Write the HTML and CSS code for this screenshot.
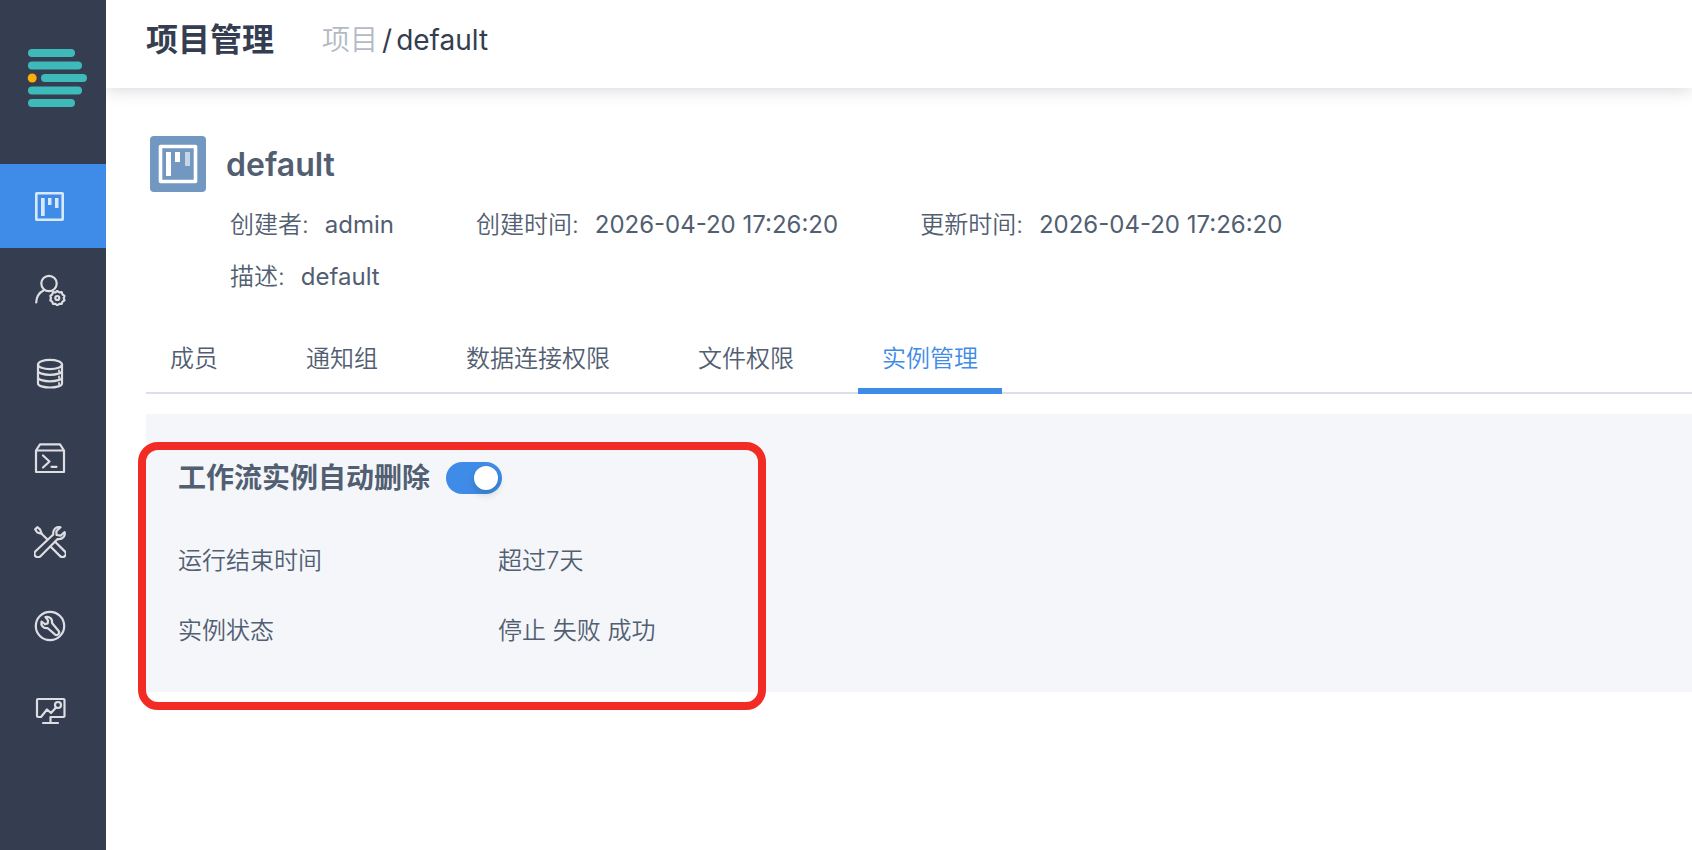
FILE: index.html
```html
<!DOCTYPE html>
<html lang="zh-CN">
<head>
<meta charset="utf-8">
<title>项目管理</title>
<link rel="stylesheet" href="styles.css">
</head>
<body>
<div class="app">
  <aside class="sidebar">
    <a class="logo" href="#" aria-label="首页">
      <svg width="64" height="60" viewBox="0 0 64 60" fill="#3fbaba">
        <rect x="2" y="1" width="47" height="8" rx="4"/>
        <rect x="2" y="13.500" width="54" height="8" rx="4"/>
        <rect x="15" y="26" width="46" height="8" rx="4"/>
        <rect x="2" y="38.500" width="54" height="8" rx="4"/>
        <rect x="2" y="51" width="47" height="8" rx="4"/>
        <circle cx="6.200" cy="30" r="4.500" fill="#fab005"/>
      </svg>
    </a>
    <nav class="menu">
      <a class="menu-item active" href="#" aria-label="项目管理">
        <svg class="icon" viewBox="0 0 32 32"><rect x="2.300" y="3.300" width="26.400" height="26.400" rx=".5" stroke-width="2.600"/><g fill="currentColor" stroke="none"><rect x="7" y="8" width="3.700" height="18"/><rect x="14" y="8" width="3.500" height="7"/><rect x="21" y="8" width="3.500" height="10"/></g></svg>
      </a>
      <a class="menu-item" href="#" aria-label="用户管理">
        <svg class="icon" viewBox="0 0 32 32"><circle cx="15" cy="9.500" r="7.700"/><path d="M2.200 28.500C2.500 22.500 5.500 18.500 9.800 16.300"/><path d="M23.300 17l2 1.300 2.400-.1.800 2.300 2 1.300-.8 2.300.8 2.200-2 1.400-.8 2.200-2.400 0-2 1.400-1.900-1.400-2.400 0-.8-2.200-1.900-1.400.7-2.200-.7-2.300 1.900-1.300.8-2.300 2.400.1z"/><circle cx="23.300" cy="24" r="2"/></svg>
      </a>
      <a class="menu-item" href="#" aria-label="数据连接">
        <svg class="icon" viewBox="0 0 32 32"><ellipse cx="16" cy="6.500" rx="12" ry="4.600"/><path d="M4 6.500V25.500c0 2.300 5.400 4 12 4s12-1.700 12-4V6.500M4 12.700c0 2.300 5.400 4.100 12 4.100S28 15 28 12.700M4 19.200c0 2.300 5.400 4.100 12 4.100s12-1.800 12-4.100"/><path d="M25 12.300v1.400M25 18.500v1.400M25 24.800v1.400" stroke-width="1.800"/></svg>
      </a>
      <a class="menu-item" href="#" aria-label="脚本">
        <svg class="icon" viewBox="0 0 32 32"><path d="M2 8.500 6 2.300h20l4 6.200V30H2zM2 8.500h28"/><path d="M9 13.500l6.500 6L9 25.500M17.500 24.800h5"/></svg>
      </a>
      <a class="menu-item" href="#" aria-label="工具">
        <svg class="icon" viewBox="0 0 32 32"><path d="M26.500 1.300c-4-1-8 1.700-7.200 7.200L1.500 25.300a3.500 3.500 0 0 0 5 5L23.600 13c5 .8 8-3 7-7l-4 3.700-4-.7-.3-3.800z"/><path d="M13.500 13.500 7.800 8 6 3.300 3.300 1.200 1.200 3.300 3.300 6.500 8 8M16.500 20.500l9.600 9.600a3.300 3.300 0 0 0 4.700-4.700l-9.700-9.700"/></svg>
      </a>
      <a class="menu-item" href="#" aria-label="运维">
        <svg class="icon" viewBox="0 0 32 32"><circle cx="16" cy="16" r="14.200"/><path d="M11.500 7c4-1 7.300 2 6.500 6l6.300 7.500a2.600 2.600 0 0 1-3.700 3.700L13.500 18c-4 .8-7-2.500-6-6.500l3.500 2.700 2.700-.8.400-2.700z"/></svg>
      </a>
      <a class="menu-item" href="#" aria-label="监控">
        <svg class="icon" viewBox="0 0 32 32"><path d="M7 23H4a1 1 0 0 1-1-1V6a1 1 0 0 1 1-1h25.500a1 1 0 0 1 1 1v16a1 1 0 0 1-1 1H16.500V29M9 29h15M7 23l6-7.500 4 3.500 5-5.500"/><circle cx="24" cy="11" r="3"/></svg>
      </a>
    </nav>
  </aside>

  <div class="page">
    <header class="topbar">
      <h1 class="page-title">项目管理</h1>
      <nav class="breadcrumb"><a href="#">项目</a><span>/</span><span>default</span></nav>
    </header>

    <main class="content">
      <section class="project">
        <div class="project-head">
          <svg class="project-icon" viewBox="0 0 56 56"><rect width="56" height="56" rx="4" fill="#7297c1"/><rect x="10.500" y="10.500" width="35" height="35" fill="none" stroke="#fff" stroke-width="3.600" stroke-linejoin="round"/><g fill="#fff"><rect x="16" y="16" width="5" height="24"/><rect x="25" y="16" width="5" height="10"/><rect x="35" y="16" width="5" height="14" opacity=".6"/></g></svg>
          <h2 class="project-name">default</h2>
        </div>
        <dl class="meta">
          <div class="meta-item"><dt>创建者:</dt><dd>admin</dd></div>
          <div class="meta-item"><dt>创建时间:</dt><dd>2026-04-20 17:26:20</dd></div>
          <div class="meta-item"><dt>更新时间:</dt><dd>2026-04-20 17:26:20</dd></div>
          <div class="meta-item wide"><dt>描述:</dt><dd>default</dd></div>
        </dl>
      </section>

      <div class="tabs" role="tablist">
        <button class="tab" role="tab" type="button">成员</button>
        <button class="tab" role="tab" type="button">通知组</button>
        <button class="tab" role="tab" type="button">数据连接权限</button>
        <button class="tab" role="tab" type="button">文件权限</button>
        <button class="tab selected" role="tab" type="button" aria-selected="true">实例管理</button>
      </div>

      <section class="panel">
        <div class="panel-head">
          <label class="panel-title" for="auto-delete">工作流实例自动删除</label>
          <input class="switch" id="auto-delete" type="checkbox" role="switch" checked>
        </div>
        <dl class="rules">
          <dt>运行结束时间</dt><dd>超过7天</dd>
          <dt>实例状态</dt><dd>停止 失败 成功</dd>
        </dl>
        <div class="highlight"></div>
      </section>
    </main>
  </div>
</div>
</body>
</html>
```
FILE: styles.css
```css
* { box-sizing: border-box; }

body {
  margin: 0;
  background: #fff;
  color: #525e71;
  font-family: Inter, "Noto Sans CJK SC", sans-serif;
  font-size: 24px;
  line-height: 36px;
}

h1, h2, dl, dd { margin: 0; }
a { color: inherit; text-decoration: none; }

.app { display: flex; min-height: 100vh; }

.sidebar { flex: none; width: 106px; background: #353d50; }
.logo { display: block; height: 164px; padding: 48px 0 0 26px; }
.logo svg { display: block; }
.menu { display: flex; flex-direction: column; }
.menu-item {
  display: flex;
  align-items: center;
  height: 84px;
  padding-left: 34px;
  color: #dcdee2;
}
.menu-item.active { background: #3f8ce8; color: #d9e8fa; }
.icon {
  width: 32px;
  height: 32px;
  fill: none;
  stroke: currentColor;
  stroke-width: 2.2;
  stroke-linecap: round;
  stroke-linejoin: round;
}

.page { flex: 1; min-width: 0; }
.topbar {
  display: flex;
  align-items: center;
  gap: 48px;
  height: 88px;
  padding: 0 40px 8px;
  box-shadow: 0 2px 16px rgba(53, 61, 80, .2);
  clip-path: inset(0 0 -24px 0);
  color: #353d50;
}
.page-title { font-size: 32px; font-weight: 700; line-height: 48px; }
.breadcrumb { display: flex; gap: 4px; font-size: 28px; line-height: 40px; }
.breadcrumb a { color: #b4bac4; font-weight: 350; }

.content { padding: 48px 0 0 40px; }
.project { padding-left: 4px; }
.project-head { display: flex; align-items: center; gap: 20px; }
.project-icon { width: 56px; height: 56px; }
.project-name { padding-top: 2px; font-size: 32px; font-weight: 600; line-height: 48px; }
.meta {
  display: flex;
  flex-wrap: wrap;
  gap: 16px 82px;
  padding: 15px 0 0 80px;
}
.meta-item { display: flex; gap: 16px; }
.meta-item dt { font-weight: 350; }
.meta-item.wide { flex-basis: 100%; }

.tabs {
  display: flex;
  gap: 40px;
  margin-top: 33px;
  border-bottom: 2px solid #dadfeb;
}
.tab {
  height: 66px;
  margin-bottom: -2px;
  padding: 2px 24px 0;
  border: 0;
  border-bottom: 6px solid transparent;
  background: none;
  color: inherit;
  font: inherit;
  font-weight: 350;
}
.tab.selected { border-color: #3f8ce8; color: #3f8ce8; }

.panel {
  position: relative;
  margin-top: 20px;
  padding: 44px 32px 43px;
  background: #f4f6fa;
}
.panel-head { display: flex; align-items: center; gap: 16px; }
.panel-title { font-size: 28px; font-weight: 700; line-height: 40px; }
.switch {
  appearance: none;
  width: 56px;
  height: 32px;
  margin: 0;
  padding: 4px;
  border-radius: 16px;
  background: #3f8ce8;
}
.switch::before {
  content: "";
  display: block;
  width: 24px;
  height: 24px;
  margin-left: auto;
  border-radius: 50%;
  background: #fff;
  box-shadow: 0 4px 8px rgba(0, 35, 11, .2);
}
.rules {
  display: grid;
  grid-template-columns: 320px 1fr;
  row-gap: 34px;
  margin-top: 45px;
  font-weight: 350;
}
.highlight {
  position: absolute;
  top: 28px;
  bottom: -18px;
  left: -8px;
  width: 628px;
  border: 8px solid #f22c25;
  border-radius: 20px;
  pointer-events: none;
}
```
